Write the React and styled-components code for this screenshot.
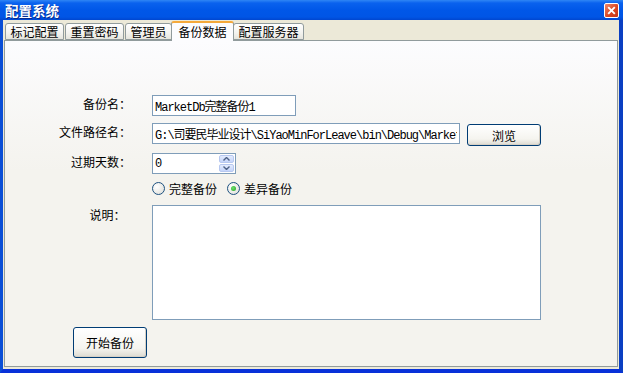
import styled, { createGlobalStyle } from "styled-components";

const GlobalStyle = createGlobalStyle`
  html, body {
    margin: 0;
    padding: 0;
    background: #0054e3;
  }
  * {
    box-sizing: border-box;
  }
`;

const CJK = `"Noto Sans CJK SC", "Noto Sans", sans-serif`;
const MONO = `"Liberation Mono", "Noto Sans CJK SC", monospace`;

const Window = styled.div`
  width: 623px;
  height: 373px;
  display: flex;
  flex-direction: column;
  background: #0054e3;
  border-left: 3px solid #0a4ed6;
  border-right: 4px solid #0a3fc2;
  border-bottom: 4px solid #0831d9;
  font-family: ${CJK};
  font-size: 12px;
  color: #000;
`;

const TitleBar = styled.div`
  height: 20px;
  margin: 0 -4px 0 -3px;
  padding: 0 4px 0 5px;
  display: flex;
  align-items: center;
  justify-content: space-between;
  background: linear-gradient(
    #2f86f5 0%,
    #0a62ee 15%,
    #0057e8 50%,
    #0055e5 85%,
    #0046cf 100%
  );
`;

const Title = styled.span`
  color: #fff;
  font-weight: 700;
  font-size: 13.5px;
  line-height: 20px;
  text-shadow: 1px 1px 0 #0a2b8a;
`;

const CloseBtn = styled.div`
  width: 15px;
  height: 15px;
  border: 1px solid #fff;
  border-radius: 2px;
  background: linear-gradient(135deg, #f0876a, #d8431f 60%, #c1371a);
  display: flex;
  align-items: center;
  justify-content: center;
`;

const Client = styled.div`
  flex: 1;
  background: #ece9d8;
  display: flex;
  flex-direction: column;
  padding: 1px 1px 2px 1px;
`;

const TabStrip = styled.div`
  display: flex;
  align-items: flex-end;
  height: 19px;
  padding-left: 1px;
  position: relative;
  z-index: 1;
`;

const Tab = styled.div`
  height: 17px;
  padding: 0 4.5px;
  margin: 0 1px 0 0;
  display: flex;
  align-items: center;
  line-height: 1;
  border: 1px solid #919b9c;
  border-radius: 3px 3px 0 0;
  background: linear-gradient(#ffffff, #f3f3ef 60%, #e6e5dd);
  position: relative;
  z-index: 1;
  ${(p) =>
    p.$active &&
    `
    height: 20px;
    padding: 0 6.5px;
    margin: 0 -1px -1px -2px;
    border-top: 2px solid #f5a93a;
    border-bottom: none;
    background: #fcfcfe;
    z-index: 2;
  `}
`;

const Panel = styled.div`
  flex: 1;
  border: 1px solid #919b9c;
  background: linear-gradient(#fcfcfe, #f4f3ee 40%, #f4f3ee);
  padding: 54px 0 0 0;
  display: grid;
  grid-template-columns: 126px auto;
  grid-auto-rows: min-content;
  column-gap: 21px;
`;

const Label = styled.div`
  text-align: right;
  padding-top: ${(p) => p.$top || 1}px;
  white-space: nowrap;
  line-height: 14px;
`;

const Field = styled.div`
  display: flex;
  align-items: flex-start;
  gap: 7px;
  margin-bottom: ${(p) => p.$mb || 7}px;
`;

const TextBox = styled.input`
  width: ${(p) => p.$w}px;
  height: 21px;
  border: 1px solid #7f9db9;
  background: #fff;
  padding: 0 2px;
  font-family: ${MONO};
  font-size: 12px;
  letter-spacing: -1px;
  color: #000;
  outline: none;
`;

const Button = styled.button`
  width: ${(p) => p.$w}px;
  height: ${(p) => p.$h}px;
  border: 1px solid #003c74;
  border-radius: 3px;
  background: linear-gradient(#ffffff, #f5f4ef 70%, #dcdad1);
  box-shadow: inset -1px -1px 0 #d6d0c5;
  font-family: ${CJK};
  font-size: 12px;
  color: #000;
  padding: 0;
  margin-top: ${(p) => p.$mt || 0}px;
`;

const Spin = styled.div`
  width: 84px;
  height: 21px;
  border: 1px solid #7f9db9;
  background: #fff;
  display: flex;
  justify-content: space-between;
  padding: 1px;
`;

const SpinText = styled.span`
  font-family: ${MONO};
  font-size: 12px;
  line-height: 18px;
  padding-left: 1px;
`;

const SpinButtons = styled.div`
  width: 15px;
  display: flex;
  flex-direction: column;
  gap: 1px;
`;

const SpinBtn = styled.div`
  flex: 1;
  border: 1px solid #b7c8f0;
  border-radius: 2px;
  background: linear-gradient(#e3ebfd, #c4d4fa);
  display: flex;
  align-items: center;
  justify-content: center;
`;

const RadioRow = styled.div`
  display: flex;
  align-items: center;
  gap: 10px;
  height: 14px;
  margin: 0 0 10px;
`;

const RadioItem = styled.label`
  display: flex;
  align-items: center;
  gap: 4px;
`;

const Radio = styled.span`
  width: 13px;
  height: 13px;
  border-radius: 50%;
  border: 1px solid #1c5180;
  background: radial-gradient(circle at 35% 35%, #ffffff, #dcdcd6);
  display: flex;
  align-items: center;
  justify-content: center;
  &::after {
    content: "";
    display: ${(p) => (p.$on ? "block" : "none")};
    width: 5px;
    height: 5px;
    border-radius: 50%;
    background: radial-gradient(circle at 40% 40%, #6fe06f, #21a121);
  }
`;

const Memo = styled.textarea`
  width: 389px;
  height: 115px;
  border: 1px solid #7f9db9;
  background: #fff;
  resize: none;
  outline: none;
`;

const Footer = styled.div`
  grid-column: 1 / span 2;
  padding-left: 68px;
`;

const tabs = ["标记配置", "重置密码", "管理员", "备份数据", "配置服务器"];

function App() {
  return (
    <>
      <GlobalStyle />
      <Window>
        <TitleBar>
          <Title>配置系统</Title>
          <CloseBtn>
            <svg width="9" height="9" viewBox="0 0 9 9">
              <path d="M1.2 1.2 L7.8 7.8 M7.8 1.2 L1.2 7.8" stroke="#fff" strokeWidth="1.9" />
            </svg>
          </CloseBtn>
        </TitleBar>
        <Client>
          <TabStrip>
            {tabs.map((t) => (
              <Tab key={t} $active={t === "备份数据"}>
                {t}
              </Tab>
            ))}
          </TabStrip>
          <Panel>
            <Label $top={2}>备份名：</Label>
            <Field>
              <TextBox $w={144} readOnly value="MarketDb完整备份1" />
            </Field>

            <Label $top={2}>文件路径名：</Label>
            <Field>
              <TextBox
                $w={308}
                readOnly
                value="G:\司要民毕业设计\SiYaoMinForLeave\bin\Debug\MarketDb完整备份1.bak"
              />
              <Button $w={74} $h={22} $mt={1}>
                浏览
              </Button>
            </Field>

            <Label $top={2}>过期天数：</Label>
            <Field>
              <Spin>
                <SpinText>0</SpinText>
                <SpinButtons>
                  <SpinBtn>
                    <svg width="7" height="4" viewBox="0 0 7 4">
                      <path d="M0.5 3.5 L3.5 0.5 L6.5 3.5" fill="none" stroke="#4d6185" strokeWidth="1.4" />
                    </svg>
                  </SpinBtn>
                  <SpinBtn>
                    <svg width="7" height="4" viewBox="0 0 7 4">
                      <path d="M0.5 0.5 L3.5 3.5 L6.5 0.5" fill="none" stroke="#4d6185" strokeWidth="1.4" />
                    </svg>
                  </SpinBtn>
                </SpinButtons>
              </Spin>
            </Field>

            <div />
            <RadioRow>
              <RadioItem>
                <Radio />
                完整备份
              </RadioItem>
              <RadioItem>
                <Radio $on />
                差异备份
              </RadioItem>
            </RadioRow>

            <Label $top={3}>说明：&nbsp;&nbsp;</Label>
            <Field $mb={7}>
              <Memo />
            </Field>

            <Footer>
              <Button $w={74} $h={31}>
                开始备份
              </Button>
            </Footer>
          </Panel>
        </Client>
      </Window>
    </>
  );
}

export default App;
